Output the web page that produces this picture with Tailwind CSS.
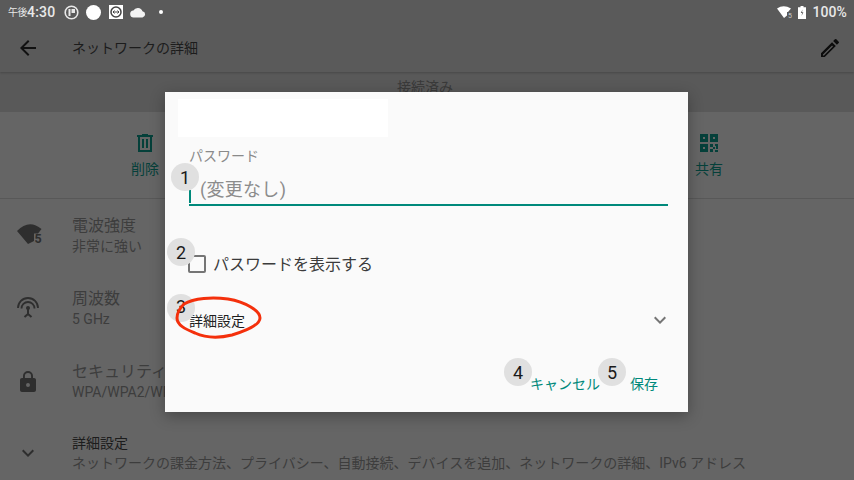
<!DOCTYPE html>
<html lang="ja">
<head>
<meta charset="utf-8">
<script src="https://cdn.jsdelivr.net/npm/@tailwindcss/browser@4"></script>
</head>
<body class="w-[854px] h-[480px] overflow-hidden relative bg-[#656565] font-['Roboto','Noto_Sans_CJK_JP',sans-serif]">
<div class="flex flex-col h-[480px]">
  <header class="bg-[#5a5a5a] h-[72px] shrink-0 shadow-[0_1px_2px_rgba(0,0,0,0.2)] relative z-10">
    <div class="h-6 flex items-center justify-between pl-2 pr-[7px]">
      <div class="flex items-center text-[#e8e8e8]">
        <span class="text-[10px] w-[19px] whitespace-nowrap tracking-[-0.5px]">午後</span>
        <span class="text-[14px] font-medium w-[27px] tracking-[0.2px]">4:30</span>
        <div class="flex items-center ml-[11px]">
          <svg class="-ml-[1px]" width="15" height="15" viewBox="0 0 15 15"><circle cx="7.5" cy="7.5" r="6.3" fill="none" stroke="#e8e8e8" stroke-width="1.6"/><path d="M4.5 4h2v7h-2zM7.5 4h3.500v4H7.500z" fill="#e8e8e8"/></svg>
          <svg class="ml-[7px]" width="15" height="15" viewBox="0 0 15 15"><circle cx="7.5" cy="7.5" r="7.5" fill="#fff"/></svg>
          <svg class="ml-[8px]" width="14" height="14" viewBox="0 0 14 14"><rect width="14" height="14" fill="#fff"/><circle cx="7" cy="7" r="5" fill="none" stroke="#444" stroke-width="1.5"/><path d="M4 7h6M5.500 5.500 4 7l1.500 1.500M8.500 5.500 10 7 8.500 8.500" fill="none" stroke="#444"/></svg>
          <svg class="ml-[7px]" width="16" height="11" viewBox="0 0 16 11"><path d="M4 10.500a3.500 3.500 0 0 1-.6-7A5 5 0 0 1 12.500 4.200 3.200 3.200 0 0 1 12.500 10.500z" fill="#f2f2f2"/></svg>
          <span class="ml-[13px] w-[4px] h-[4px] rounded-full bg-white"></span>
        </div>
      </div>
      <div class="flex items-center text-[#e8e8e8]">
        <svg width="16" height="12" viewBox="0 0 16 12"><path d="M0 2.500Q6.500-1.800 14 2.500L11 6H10v3.500L7 12z" fill="#fff"/><text x="11" y="11.500" font-size="7" fill="#ccc" font-family="Roboto">5</text></svg>
        <svg class="ml-[5px]" width="8" height="13" viewBox="0 0 8 13"><path d="M2.500 0h3v1.200H8V13H0V1.200h2.500z" fill="#fff"/><path d="M4.500 3.500 2.800 7h1.400l-.7 3 1.900-3.700H4z" fill="#555"/></svg>
        <span class="text-[14px] font-medium ml-[6px] tracking-[0.1px]">100%</span>
      </div>
    </div>
    <div class="h-12 flex items-center justify-between pl-4 pr-3">
      <div class="flex items-center">
        <svg width="24" height="24" viewBox="0 0 24 24" fill="#111"><path d="M20 11H7.830l5.590-5.590L12 4l-8 8 8 8 1.410-1.410L7.830 13H20z"/></svg>
        <span class="ml-8 text-[14px] text-[#1c1c1c]">ネットワークの詳細</span>
      </div>
      <svg class="w-6 h-6" viewBox="0 0 24 24" fill="#0c0c0c"><path d="M3 17.250V21h3.750L17.810 9.940l-3.750-3.750zM5.920 19.500H5v-.92l9.060-9.060.92.92zM20.710 7.040a1 1 0 0 0 0-1.410l-2.340-2.340a1 1 0 0 0-1.410 0l-1.830 1.830 3.750 3.750z"/></svg>
    </div>
  </header>
  <div class="h-10 bg-[#595959] shrink-0 flex justify-center pt-[5px] pr-[4px] text-[14px] text-[#3a3a3a]">接続済み</div>
  <div class="h-[87px] shrink-0 border-b border-[#585858] flex justify-between px-[109px] pt-[19px]">
    <div class="w-[72px] flex flex-col items-center">
      <svg class="w-6 h-6" viewBox="0 0 24 24" fill="#05403a"><path d="M15 3H9v1H4v2h1v15h14V6h1V4h-5zm2 16H7V6h10zM9 8h2v9H9zm4 0h2v9h-2z"/></svg>
      <span class="text-[14px] text-[#05403a] mt-[4px]">削除</span>
    </div>
    <div class="w-[72px] flex flex-col items-center">
      <svg class="w-6 h-6" viewBox="0 0 24 24" fill="#05403a"><path fill-rule="evenodd" d="M3 3h8v8H3zm3 3v2h2V6zM13 3h8v8h-8zm3 3v2h2V6zM3 13h8v8H3zm3 3v2h2v-2zM13 13h3v3h-3zM18 13h3v5h-2v-3h-1zM16 16h2v2h-2zM13 18h3v3h-3zM18 19h3v2h-3z"/></svg>
      <span class="text-[14px] text-[#05403a] mt-[4px]">共有</span>
    </div>
  </div>
  <div class="flex flex-col text-[#3d3d3d]">
    <div class="flex items-center h-[73px] pl-4">
      <svg width="27" height="24" viewBox="0 0 27 24" fill="#2e2e2e"><path d="M1 7Q13-5.500 25.500 5L22 9.500H18V17L12 20z"/><text x="18.500" y="19" font-size="12.500" font-weight="700" fill="#2e2e2e" font-family="Roboto">5</text></svg>
      <div class="ml-[29px]"><div class="text-[16px] leading-5">電波強度</div><div class="text-[14px] leading-5">非常に強い</div></div>
    </div>
    <div class="flex items-center h-[73px] pl-4">
      <svg width="24" height="24" viewBox="0 0 24 24" fill="none" stroke="#2e2e2e" stroke-width="1.800"><path d="M2 11a10 10 0 0 1 20 0M5.500 11.500a6.500 6.500 0 0 1 13 0"/><circle cx="12" cy="11" r="2" fill="#2e2e2e" stroke="none"/><path d="M12 12v5l-3.500 3M12 17l3.500 3" stroke-width="2"/></svg>
      <div class="ml-8"><div class="text-[16px] leading-5">周波数</div><div class="text-[14px] leading-5">5 GHz</div></div>
    </div>
    <div class="flex items-center h-[73px] pl-4">
      <svg class="w-6 h-6" viewBox="0 0 24 24" fill="#2e2e2e"><path d="M18 8h-1V6A5 5 0 0 0 7 6v2H6c-1.100 0-2 .9-2 2v10c0 1.100.9 2 2 2h12c1.100 0 2-.9 2-2V10c0-1.100-.9-2-2-2zm-6 9a2 2 0 1 1 0-4 2 2 0 0 1 0 4zm3.100-9H8.900V6a3.100 3.100 0 0 1 6.200 0z"/></svg>
      <div class="ml-8"><div class="text-[16px] leading-5">セキュリティ</div><div class="text-[14px] leading-5">WPA/WPA2/WPA3</div></div>
    </div>
    <div class="flex items-center h-[68px] pl-4 pt-[1px]">
      <svg class="w-6 h-6" viewBox="0 0 24 24" fill="#2e2e2e"><path d="M16.590 8.590 12 13.170 7.410 8.590 6 10l6 6 6-6z"/></svg>
      <div class="ml-8"><div class="text-[14px] leading-5 text-[#1c1c1c]">詳細設定</div><div class="text-[14px] leading-5 whitespace-nowrap">ネットワークの課金方法、プライバシー、自動接続、デバイスを追加、ネットワークの詳細、IPv6 アドレス</div></div>
    </div>
  </div>
</div>

<div class="absolute left-[165px] top-[92px] w-[523px] h-[320px] bg-[#fafafa] shadow-[0_4px_14px_rgba(0,0,0,0.3)] z-20 flex flex-col pl-6 pr-5">
  <div class="absolute left-[13px] top-[7px] w-[210px] h-[38px] bg-white"></div>
  <label class="text-[14px] leading-5 text-[#8a8a8a] mt-[54px]">パスワード</label>
  <div class="h-[40px] flex items-center border-b-2 border-[#00897b] relative">
    <span class="absolute left-0 top-[24px] w-[2px] h-[13px] bg-[#00897b]"></span>
    <span class="text-[18px] text-[#8c8c8c] ml-[11px] mt-[8px] tracking-[0.3px]">(変更なし)</span>
  </div>
  <div class="flex items-center mt-[48px] h-5">
    <span class="w-[18px] h-[18px] border-2 border-[#757575] rounded-[2px] -ml-px"></span>
    <span class="text-[16px] text-[#3b3b3b] ml-[7px] mt-[2px]">パスワードを表示する</span>
  </div>
  <div class="flex items-center justify-between mt-[34px] h-6">
    <span class="text-[14px] text-[#1f1f1f] mt-[2px]">詳細設定</span>
    <svg class="w-6 h-6 -mr-[4px]" viewBox="0 0 24 24" fill="#757575"><path d="M16.590 8.590 12 13.170 7.410 8.590 6 10l6 6 6-6z"/></svg>
  </div>
  <div class="flex justify-end mt-[42px] text-[14px] text-[#00897b] pr-[10px]">
    <span>キャンセル</span>
    <span class="ml-[30px]">保存</span>
  </div>
</div>

<div class="absolute z-30 left-[171px] top-[163px] w-7 h-7 rounded-full bg-[#e0e0e0] flex items-center justify-center text-[18px] text-[#1a1a1a]">1</div>
<div class="absolute z-30 left-[167px] top-[238px] w-7 h-7 rounded-full bg-[#e0e0e0] flex items-center justify-center text-[18px] text-[#1a1a1a]">2</div>
<div class="absolute z-30 left-[167px] top-[294px] w-7 h-7 rounded-full bg-[#e0e0e0] flex items-center justify-center text-[18px] text-[#1a1a1a] pb-[3px]">3</div>
<div class="absolute z-30 left-[504px] top-[358px] w-7 h-7 rounded-full bg-[#e0e0e0] flex items-center justify-center text-[18px] text-[#1a1a1a]">4</div>
<div class="absolute z-30 left-[598px] top-[358px] w-7 h-7 rounded-full bg-[#e0e0e0] flex items-center justify-center text-[18px] text-[#1a1a1a]">5</div>
<svg class="absolute z-30 left-[170px] top-[292px]" width="96" height="50" viewBox="0 0 96 50" fill="none"><path d="M14 12C24 6 42 5 58 7C76 10 90 19 90 26C90 34 72 40 62 43C50 46 36 46 25 41C15 37 7 33 7 26C7 21 9 17 14 12" stroke="#f4300c" stroke-width="3" stroke-linecap="round"/></svg>
</body>
</html>
